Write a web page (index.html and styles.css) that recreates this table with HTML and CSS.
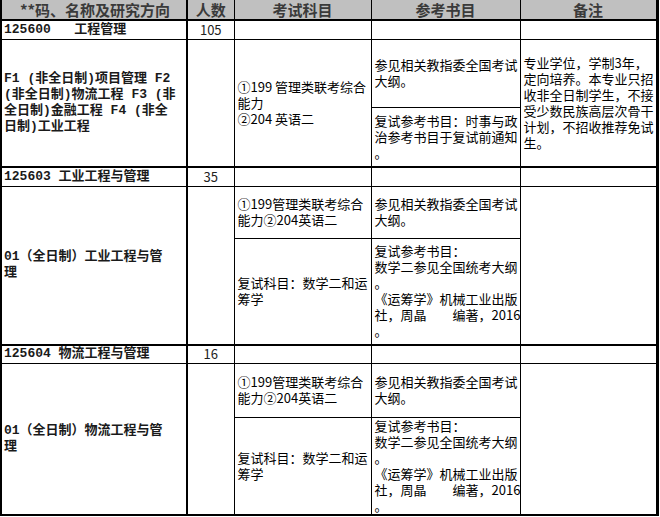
FILE: index.html
```html
<!DOCTYPE html>
<html lang="zh-CN">
<head>
<meta charset="utf-8">
<title>招生目录</title>
<link rel="stylesheet" href="styles.css">
</head>
<body>
<table class="catalog">
  <colgroup>
    <col class="c1"><col class="c2"><col class="c3"><col class="c4"><col class="c5">
  </colgroup>
  <thead>
    <tr class="head">
      <th class="first">**码、名称及研究方向</th>
      <th class="num">人数</th>
      <th>考试科目</th>
      <th>参考书目</th>
      <th class="last">备注</th>
    </tr>
  </thead>
  <tbody>
    <tr class="major h-a">
      <td class="first name pre">125600   工程管理</td>
      <td class="num">105</td>
      <td></td><td></td><td class="last"></td>
    </tr>
    <tr class="h-b1">
      <td class="first name" rowspan="2">F1 (非全日制)项目管理 F2<br>(非全日制)物流工程 F3 (非<br>全日制)金融工程 F4 (非全<br>日制)工业工程</td>
      <td class="num" rowspan="2"></td>
      <td rowspan="2">①199 管理类联考综合<br>能力<br>②204 英语二</td>
      <td>参见相关教指委全国考试<br>大纲。</td>
      <td class="last" rowspan="2">专业学位，学制3年，<br>定向培养。本专业只招<br>收非全日制学生，不接<br>受少数民族高层次骨干<br>计划，不招收推荐免试<br>生。</td>
    </tr>
    <tr class="h-b2">
      <td>复试参考书目：时事与政<br>治参考书目于复试前通知<br>。</td>
    </tr>

    <tr class="major group h-c">
      <td class="first name">125603 工业工程与管理</td>
      <td class="num">35</td>
      <td></td><td></td><td class="last"></td>
    </tr>
    <tr class="h-d1">
      <td class="first name" rowspan="2">01（全日制）工业工程与管<br>理</td>
      <td class="num" rowspan="2"></td>
      <td>①199管理类联考综合<br>能力②204英语二</td>
      <td>参见相关教指委全国考试<br>大纲。</td>
      <td class="last" rowspan="2"></td>
    </tr>
    <tr class="h-d2">
      <td>复试科目：数学二和运<br>筹学</td>
      <td>复试参考书目：<br>数学二参见全国统考大纲<br>。<br>《运筹学》机械工业出版<br>社，周晶　　编著，2016<br>。</td>
    </tr>

    <tr class="major group h-e">
      <td class="first name">125604 物流工程与管理</td>
      <td class="num">16</td>
      <td></td><td></td><td class="last"></td>
    </tr>
    <tr class="h-f1">
      <td class="first name" rowspan="2">01（全日制）物流工程与管<br>理</td>
      <td class="num" rowspan="2"></td>
      <td>①199管理类联考综合<br>能力②204英语二</td>
      <td>参见相关教指委全国考试<br>大纲。</td>
      <td class="last" rowspan="2"></td>
    </tr>
    <tr class="h-f2 bottom">
      <td>复试科目：数学二和运<br>筹学</td>
      <td>复试参考书目：<br>数学二参见全国统考大纲<br>。<br>《运筹学》机械工业出版<br>社，周晶　　编著，2016<br>。</td>
    </tr>
  </tbody>
</table>
</body>
</html>
```

FILE: styles.css
```css
html, body {
  margin: 0;
  padding: 0;
  background: #ffffff;
}

.catalog {
  border-collapse: collapse;
  table-layout: fixed;
  width: 656px;
  font-family: "Noto Sans CJK SC", "Noto Sans", sans-serif;
  font-size: 13px;
  line-height: 16px;
  color: #000;
}

.c1 { width: 186px; }
.c2 { width: 47px; }
.c3 { width: 137px; }
.c4 { width: 149px; }
.c5 { width: 137px; }

.catalog th,
.catalog td {
  border: 1px solid #000;
  padding: 0 3px;
  vertical-align: middle;
  text-align: left;
  white-space: nowrap;
  overflow: hidden;
}

.catalog .first {
  border-left: 2px solid #000;
  border-right: 2px solid #000;
  padding-left: 2px;
}

.catalog .last {
  border-right: 3px solid #000;
}

.head th {
  background: #c0c0c0;
  color: #3a3a3a;
  font-size: 15px;
  font-weight: bold;
  line-height: 18px;
  text-align: center;
  border-top: none;
  border-bottom: 2px solid #000;
  height: 19px;
  padding: 0;
}

.catalog .name {
  font-family: "Liberation Mono", "Noto Sans CJK SC", monospace;
  font-weight: bold;
  font-size: 13px;
  color: #1a1a1a;
}

.catalog td.pre { white-space: pre; }

.catalog td.num {
  text-align: center;
  color: #222;
}

.group td {
  border-top: 2px solid #000;
}

.bottom td,
.h-f1 td[rowspan] {
  border-bottom: 2px solid #000;
}

.h-a { height: 19px; }
.h-b1 { height: 68px; }
.h-b2 { height: 60px; }
.h-c { height: 19px; }
.h-d1 { height: 52px; }
.h-d2 { height: 107px; }
.h-e { height: 18px; }
.h-f1 { height: 54px; }
.h-f2 { height: 96px; }
```
